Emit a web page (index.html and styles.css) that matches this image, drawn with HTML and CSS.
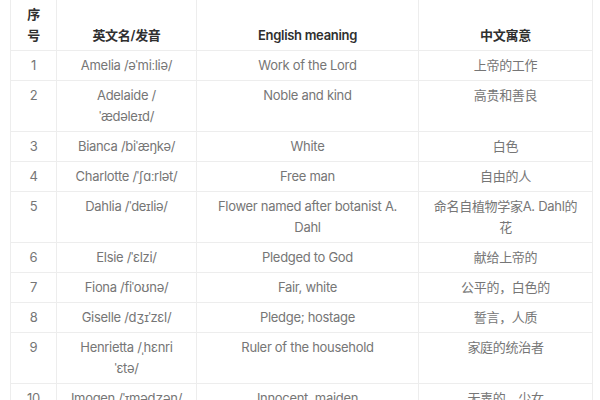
FILE: index.html
```html
<!DOCTYPE html>
<html lang="zh">
<head>
<meta charset="utf-8">
<title>Names</title>
<link rel="stylesheet" href="styles.css">
</head>
<body>
<div class="wrap">
<table class="names">
  <colgroup>
    <col class="c-num"><col class="c-name"><col class="c-en"><col class="c-zh">
  </colgroup>
  <thead>
    <tr><th>序<br>号</th><th>英文名/发音</th><th>English meaning</th><th>中文寓意</th></tr>
  </thead>
  <tbody>
    <tr><td>1</td><td>Amelia /əˈmiːliə/</td><td>Work of the Lord</td><td>上帝的工作</td></tr>
    <tr><td>2</td><td>Adelaide /<br>ˈædəleɪd/</td><td>Noble and kind</td><td>高贵和善良</td></tr>
    <tr><td>3</td><td>Bianca /biˈæŋkə/</td><td>White</td><td>白色</td></tr>
    <tr><td>4</td><td>Charlotte /ˈʃɑːrlət/</td><td>Free man</td><td>自由的人</td></tr>
    <tr><td>5</td><td>Dahlia /ˈdeɪliə/</td><td>Flower named after botanist A.<br>Dahl</td><td>命名自植物学家A. Dahl的<br>花</td></tr>
    <tr><td>6</td><td>Elsie /ˈɛlzi/</td><td>Pledged to God</td><td>献给上帝的</td></tr>
    <tr><td>7</td><td>Fiona /fiˈoʊnə/</td><td>Fair, white</td><td>公平的，白色的</td></tr>
    <tr><td>8</td><td>Giselle /dʒɪˈzɛl/</td><td>Pledge; hostage</td><td>誓言，人质</td></tr>
    <tr><td>9</td><td>Henrietta /ˌhɛnri<br>ˈɛtə/</td><td>Ruler of the household</td><td>家庭的统治者</td></tr>
    <tr><td>10</td><td>Imogen /ˈɪmədʒən/</td><td>Innocent, maiden</td><td>无辜的，少女</td></tr>
  </tbody>
</table>
</div>
</body>
</html>
```
FILE: styles.css
```css
html, body {
  margin: 0;
  padding: 0;
  background: #ffffff;
}
.wrap {
  padding: 0 0 0 10px;
}
.names {
  border-collapse: collapse;
  table-layout: fixed;
  width: 582px;
  font-family: Inter, "Noto Sans CJK SC", sans-serif;
  font-size: 13px;
  line-height: 21px;
  letter-spacing: -0.3px;
  color: #767676;
}
.c-num { width: 46px; }
.c-name { width: 140px; }
.c-en { width: 222px; }
.c-zh { width: 174px; }
.names th, .names td {
  border: 1px solid #ededed;
  padding: 4px 6px;
  text-align: center;
}
.names thead th {
  border-top: none;
  color: #2f2f2f;
  font-weight: 600;
  vertical-align: bottom;
}
.names td {
  vertical-align: top;
}
```
